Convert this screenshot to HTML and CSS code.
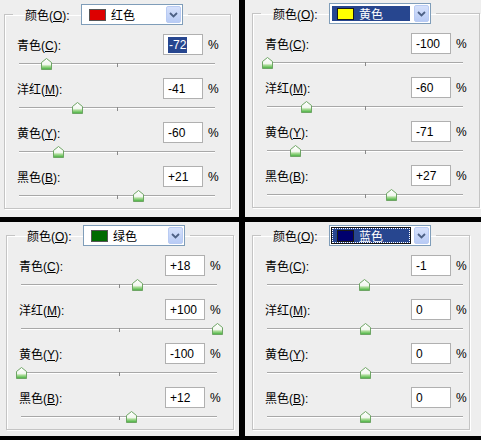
FILE: index.html
```html
<!DOCTYPE html>
<html>

<head>
    <title>可选颜色</title>
    <meta charset="utf-8">
    <meta name="viewport" content="width=device-width, initial-scale=1.0">
    <link rel="stylesheet" href="styles.css">
</head>

<body>
    <!-- shared gradient for the slider thumbs -->
    <svg class="defs" width="0" height="0">
        <defs>
            <linearGradient id="thumbFill" x1="0" y1="0" x2="0" y2="1">
                <stop offset="0" stop-color="#ffffff" />
                <stop offset="0.55" stop-color="#f2f7ef" />
                <stop offset="0.7" stop-color="#a9dc96" />
                <stop offset="1" stop-color="#3fae38" />
            </linearGradient>
        </defs>
    </svg>

    <div class="board">

        <!-- red -->
        <div class="panel panel-tl">
            <fieldset class="group">
                <legend class="group-head">
                    <span class="head-label">颜色(<u>O</u>):</span>
                    <span class="select">
                        <span class="select-value">
                            <span class="chip chip-red"></span>
                            <span class="select-text">红色</span>
                        </span>
                        <span class="select-btn"><svg width="9" height="6" viewBox="0 0 9 6"><polyline points="1,1 4.5,4.5 8,1" /></svg></span>
                    </span>
                </legend>

                <div class="row">
                    <span class="row-label">青色(<u>C</u>):</span>
                    <span class="num"><span class="num-sel">-72</span></span>
                    <span class="pct">%</span>
                </div>
                <div class="slider"><span class="thumb" style="left: 14%"><svg width="11" height="12" viewBox="0 0 11 12"><path d="M0.5 4.5 L5.5 0.5 L10.5 4.5 V11.5 H0.5 Z" /></svg></span></div>

                <div class="row">
                    <span class="row-label">洋红(<u>M</u>):</span>
                    <span class="num">-41</span>
                    <span class="pct">%</span>
                </div>
                <div class="slider"><span class="thumb" style="left: 29.5%"><svg width="11" height="12" viewBox="0 0 11 12"><path d="M0.5 4.5 L5.5 0.5 L10.5 4.5 V11.5 H0.5 Z" /></svg></span></div>

                <div class="row">
                    <span class="row-label">黄色(<u>Y</u>):</span>
                    <span class="num">-60</span>
                    <span class="pct">%</span>
                </div>
                <div class="slider"><span class="thumb" style="left: 20%"><svg width="11" height="12" viewBox="0 0 11 12"><path d="M0.5 4.5 L5.5 0.5 L10.5 4.5 V11.5 H0.5 Z" /></svg></span></div>

                <div class="row">
                    <span class="row-label">黑色(<u>B</u>):</span>
                    <span class="num">+21</span>
                    <span class="pct">%</span>
                </div>
                <div class="slider"><span class="thumb" style="left: 60.5%"><svg width="11" height="12" viewBox="0 0 11 12"><path d="M0.5 4.5 L5.5 0.5 L10.5 4.5 V11.5 H0.5 Z" /></svg></span></div>
            </fieldset>
        </div>

        <!-- yellow -->
        <div class="panel panel-tr">
            <fieldset class="group">
                <legend class="group-head">
                    <span class="head-label">颜色(<u>O</u>):</span>
                    <span class="select">
                        <span class="select-value picked">
                            <span class="chip chip-yellow"></span>
                            <span class="select-text">黄色</span>
                        </span>
                        <span class="select-btn"><svg width="9" height="6" viewBox="0 0 9 6"><polyline points="1,1 4.5,4.5 8,1" /></svg></span>
                    </span>
                </legend>

                <div class="row">
                    <span class="row-label">青色(<u>C</u>):</span>
                    <span class="num">-100</span>
                    <span class="pct">%</span>
                </div>
                <div class="slider"><span class="thumb" style="left: 0%"><svg width="11" height="12" viewBox="0 0 11 12"><path d="M0.5 4.5 L5.5 0.5 L10.5 4.5 V11.5 H0.5 Z" /></svg></span></div>

                <div class="row">
                    <span class="row-label">洋红(<u>M</u>):</span>
                    <span class="num">-60</span>
                    <span class="pct">%</span>
                </div>
                <div class="slider"><span class="thumb" style="left: 20%"><svg width="11" height="12" viewBox="0 0 11 12"><path d="M0.5 4.5 L5.5 0.5 L10.5 4.5 V11.5 H0.5 Z" /></svg></span></div>

                <div class="row">
                    <span class="row-label">黄色(<u>Y</u>):</span>
                    <span class="num">-71</span>
                    <span class="pct">%</span>
                </div>
                <div class="slider"><span class="thumb" style="left: 14.5%"><svg width="11" height="12" viewBox="0 0 11 12"><path d="M0.5 4.5 L5.5 0.5 L10.5 4.5 V11.5 H0.5 Z" /></svg></span></div>

                <div class="row">
                    <span class="row-label">黑色(<u>B</u>):</span>
                    <span class="num">+27</span>
                    <span class="pct">%</span>
                </div>
                <div class="slider"><span class="thumb" style="left: 63.5%"><svg width="11" height="12" viewBox="0 0 11 12"><path d="M0.5 4.5 L5.5 0.5 L10.5 4.5 V11.5 H0.5 Z" /></svg></span></div>
            </fieldset>
        </div>

        <!-- green -->
        <div class="panel panel-bl">
            <fieldset class="group">
                <legend class="group-head">
                    <span class="head-label">颜色(<u>O</u>):</span>
                    <span class="select">
                        <span class="select-value">
                            <span class="chip chip-green"></span>
                            <span class="select-text">绿色</span>
                        </span>
                        <span class="select-btn"><svg width="9" height="6" viewBox="0 0 9 6"><polyline points="1,1 4.5,4.5 8,1" /></svg></span>
                    </span>
                </legend>

                <div class="row">
                    <span class="row-label">青色(<u>C</u>):</span>
                    <span class="num">+18</span>
                    <span class="pct">%</span>
                </div>
                <div class="slider"><span class="thumb" style="left: 59%"><svg width="11" height="12" viewBox="0 0 11 12"><path d="M0.5 4.5 L5.5 0.5 L10.5 4.5 V11.5 H0.5 Z" /></svg></span></div>

                <div class="row">
                    <span class="row-label">洋红(<u>M</u>):</span>
                    <span class="num">+100</span>
                    <span class="pct">%</span>
                </div>
                <div class="slider"><span class="thumb" style="left: 100%"><svg width="11" height="12" viewBox="0 0 11 12"><path d="M0.5 4.5 L5.5 0.5 L10.5 4.5 V11.5 H0.5 Z" /></svg></span></div>

                <div class="row">
                    <span class="row-label">黄色(<u>Y</u>):</span>
                    <span class="num">-100</span>
                    <span class="pct">%</span>
                </div>
                <div class="slider"><span class="thumb" style="left: 0%"><svg width="11" height="12" viewBox="0 0 11 12"><path d="M0.5 4.5 L5.5 0.5 L10.5 4.5 V11.5 H0.5 Z" /></svg></span></div>

                <div class="row">
                    <span class="row-label">黑色(<u>B</u>):</span>
                    <span class="num">+12</span>
                    <span class="pct">%</span>
                </div>
                <div class="slider"><span class="thumb" style="left: 56%"><svg width="11" height="12" viewBox="0 0 11 12"><path d="M0.5 4.5 L5.5 0.5 L10.5 4.5 V11.5 H0.5 Z" /></svg></span></div>
            </fieldset>
        </div>

        <!-- blue -->
        <div class="panel panel-br">
            <fieldset class="group">
                <legend class="group-head">
                    <span class="head-label">颜色(<u>O</u>):</span>
                    <span class="select">
                        <span class="select-value picked focused">
                            <span class="chip chip-blue"></span>
                            <span class="select-text">蓝色</span>
                        </span>
                        <span class="select-btn"><svg width="9" height="6" viewBox="0 0 9 6"><polyline points="1,1 4.5,4.5 8,1" /></svg></span>
                    </span>
                </legend>

                <div class="row">
                    <span class="row-label">青色(<u>C</u>):</span>
                    <span class="num">-1</span>
                    <span class="pct">%</span>
                </div>
                <div class="slider"><span class="thumb" style="left: 49.5%"><svg width="11" height="12" viewBox="0 0 11 12"><path d="M0.5 4.5 L5.5 0.5 L10.5 4.5 V11.5 H0.5 Z" /></svg></span></div>

                <div class="row">
                    <span class="row-label">洋红(<u>M</u>):</span>
                    <span class="num">0</span>
                    <span class="pct">%</span>
                </div>
                <div class="slider"><span class="thumb" style="left: 50%"><svg width="11" height="12" viewBox="0 0 11 12"><path d="M0.5 4.5 L5.5 0.5 L10.5 4.5 V11.5 H0.5 Z" /></svg></span></div>

                <div class="row">
                    <span class="row-label">黄色(<u>Y</u>):</span>
                    <span class="num">0</span>
                    <span class="pct">%</span>
                </div>
                <div class="slider"><span class="thumb" style="left: 50%"><svg width="11" height="12" viewBox="0 0 11 12"><path d="M0.5 4.5 L5.5 0.5 L10.5 4.5 V11.5 H0.5 Z" /></svg></span></div>

                <div class="row">
                    <span class="row-label">黑色(<u>B</u>):</span>
                    <span class="num">0</span>
                    <span class="pct">%</span>
                </div>
                <div class="slider"><span class="thumb" style="left: 50%"><svg width="11" height="12" viewBox="0 0 11 12"><path d="M0.5 4.5 L5.5 0.5 L10.5 4.5 V11.5 H0.5 Z" /></svg></span></div>
            </fieldset>
        </div>

    </div>
</body>

</html>
```

FILE: styles.css
```css
body {
    margin: 0;
    width: 481px;
    height: 440px;
    background-color: #000;
    font-family: "Liberation Sans", "Noto Sans CJK SC", sans-serif;
    font-size: 12px;
    color: #000;
    overflow: hidden;
}

.defs {
    position: absolute;
    width: 0;
    height: 0;
}

.board {
    display: grid;
    grid-template-columns: 239px 236px;
    grid-template-rows: 217px 214px;
    column-gap: 6px;
    row-gap: 5px;
}

.panel {
    background-color: #eeeeee;
    overflow: hidden;
    padding-top: 3px;
    padding-left: 7px;
}

.panel-tl {
    padding-top: 4px;
    padding-left: 4px;
}

.panel-bl {
    padding-left: 6px;
}

/* group box */
.group {
    margin: 0;
    padding: 0;
    width: 227px;
    box-sizing: border-box;
    border: 1px solid #c4c4c4;
    box-shadow: inset 1px 1px 0 #fff, 1px 1px 0 #fff;
    min-inline-size: 0;
}

.panel-tr .group,
.panel-bl .group {
    width: 228px;
}

.panel-br .group {
    width: 218px;
}

.group-head {
    display: flex;
    align-items: center;
    margin-left: 8px;
    padding: 0 5px 0 12px;
    height: 21px;
}

.head-label {
    width: 56px;
}

.select {
    display: flex;
    align-items: center;
    justify-content: space-between;
    width: 102px;
    height: 21px;
    box-sizing: border-box;
    border: 1px solid #7f9db9;
    background-color: #fff;
    padding: 1px;
}

.select-value {
    display: flex;
    align-items: center;
    gap: 5px;
    height: 15px;
    padding: 0 6px 0 5px;
    margin-left: 1px;
    width: 78px;
    box-sizing: border-box;
}

.select-value.picked {
    background-color: #27468f;
    color: #fff;
}

.select-value.focused {
    outline: 1px dotted #fff;
    outline-offset: -1px;
    box-shadow: 0 0 0 1px #111;
}

.chip {
    width: 17px;
    height: 12px;
    box-sizing: border-box;
    border: 1px solid #555;
}

.picked .chip {
    border-color: #1a1a1a;
}

.chip-red {
    background-color: #dd0000;
}

.chip-yellow {
    background-color: #ffff00;
}

.chip-green {
    background-color: #006b00;
}

.chip-blue {
    background-color: #00006e;
}

.select-btn {
    display: flex;
    align-items: center;
    justify-content: center;
    width: 15px;
    height: 17px;
    box-sizing: border-box;
    border: 1px solid #b9cbf3;
    border-radius: 2px;
    background: linear-gradient(#d6e1fb, #b8cbf5);
}

.select-btn polyline {
    fill: none;
    stroke: #4d6185;
    stroke-width: 1.8;
}

/* value rows */
.row {
    display: flex;
    align-items: center;
    height: 21px;
    padding-left: 12px;
}

.group-head + .row {
    margin-top: 9px;
}

.row-label {
    width: 146px;
}

.num {
    display: flex;
    align-items: center;
    width: 40px;
    height: 21px;
    box-sizing: border-box;
    border: 1px solid #b0b0b0;
    background-color: #fff;
    padding-left: 4px;
}

.num-sel {
    background-color: #27468f;
    color: #fff;
    padding: 1px 1px;
}

.pct {
    margin-left: 5px;
}

/* slider */
.slider {
    position: relative;
    width: 196px;
    height: 23px;
    margin-left: 14px;
}

.slider:last-child {
    height: 21px;
}

.slider::before {
    content: "";
    position: absolute;
    left: 0;
    right: 0;
    top: 8px;
    height: 1px;
    background-color: #a8a8a8;
    border-bottom: 1px solid #fff;
}

.slider::after {
    content: "";
    position: absolute;
    left: 50%;
    top: 8px;
    width: 1px;
    height: 4px;
    background-color: #8a8a8a;
}

.thumb {
    position: absolute;
    top: 3px;
    margin-left: -5px;
    width: 11px;
    height: 12px;
    z-index: 1;
}

.thumb svg {
    display: block;
}

.thumb path {
    fill: url(#thumbFill);
    stroke: #6ea565;
    stroke-width: 1;
}
```
